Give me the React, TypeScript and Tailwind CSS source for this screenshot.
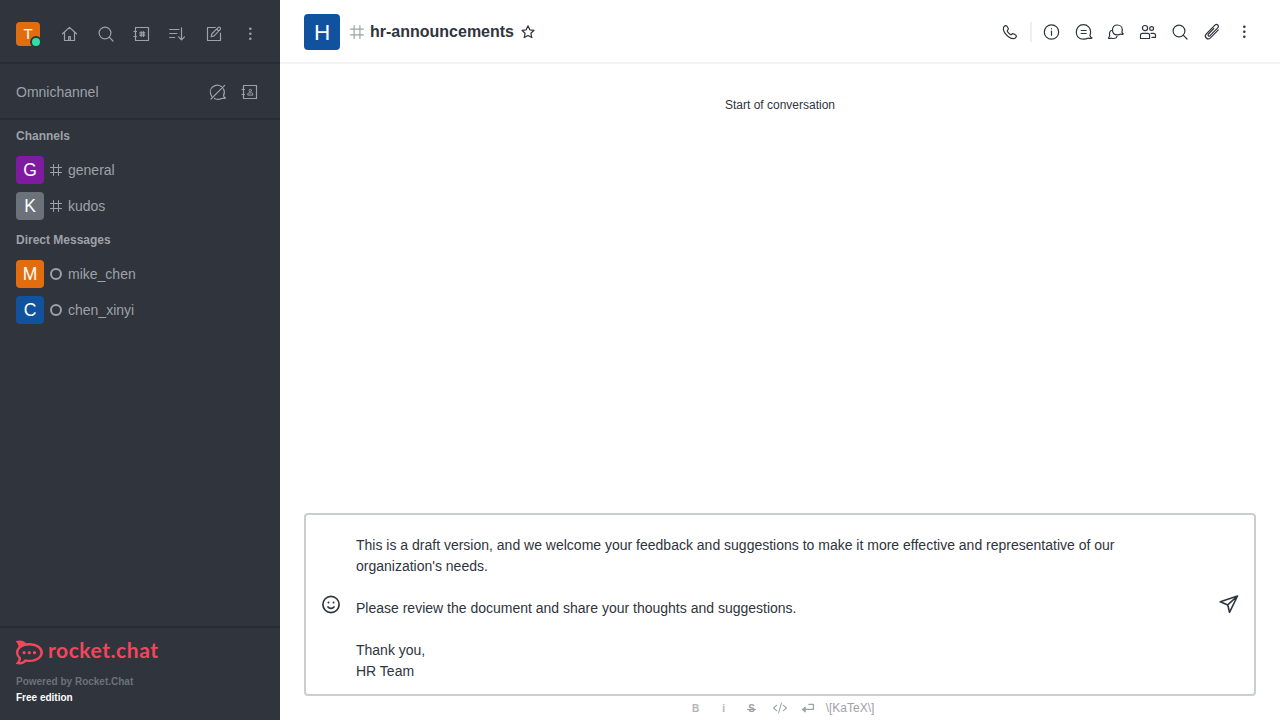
import type { ReactNode } from "react";
import { SiRocketdotchat } from "react-icons/si";

function Icon({ children, className = "size-5", w = 1.2 }: { children: ReactNode; className?: string; w?: number }) {
  return (
    <svg viewBox="0 0 20 20" className={`shrink-0 ${className}`} fill="none" stroke="currentColor" strokeWidth={w} strokeLinecap="round" strokeLinejoin="round">
      {children}
    </svg>
  );
}

function IconButton({ children, label }: { children: ReactNode; label: string }) {
  return (
    <button aria-label={label} className="flex size-7 shrink-0 items-center justify-center">
      {children}
    </button>
  );
}

function Avatar({ letter, className }: { letter: string; className: string }) {
  return (
    <svg viewBox="0 0 200 200" className={`shrink-0 rounded-[4px] ${className}`}>
      <text x="50%" y="50%" dy="0.36em" textAnchor="middle" fill="#ffffff" fontSize="125">{letter}</text>
    </svg>
  );
}

const Search = () => (
  <Icon>
    <circle cx="9" cy="9" r="5.9" />
    <path d="M13.200 13.200 17 17" />
  </Icon>
);

const Kebab = () => (
  <Icon>
    <g fill="currentColor" stroke="none">
      <circle cx="10.300" cy="4.800" r="1.300" />
      <circle cx="10.300" cy="9.800" r="1.300" />
      <circle cx="10.300" cy="14.800" r="1.300" />
    </g>
  </Icon>
);

const Hash = ({ className }: { className: string }) => (
  <svg viewBox="0 0 12 12" className={`shrink-0 ${className}`} fill="none" stroke="currentColor" strokeWidth="1" strokeLinecap="round">
    <path d="M3.500.500v11M8.500.500v11M.500 3.500h11M.500 8.500h11" />
  </svg>
);

function Row({ letter, color, name, direct }: { letter: string; color: string; name: string; direct?: boolean }) {
  return (
    <li className="flex h-9 items-center px-4">
      <Avatar letter={letter} className={`size-7 ${color}`} />
      <span className="ml-1.5 flex size-3 items-center justify-center">
        {direct ? <span className="size-3 rounded-full border-2 border-[#9ea2a8]" /> : <Hash className="size-3" />}
      </span>
      <span className="ml-1.5">{name}</span>
    </li>
  );
}

function Sidebar() {
  return (
    <aside className="flex w-[280px] shrink-0 flex-col bg-[#2f343d] text-sm text-[#9ea2a8]">
      <header className="flex h-16 items-center border-b-2 border-[#282c34] px-4 pt-1.5">
        <div className="relative mr-4 size-6">
          <Avatar letter="T" className="size-6 bg-[#e26d0e]" />
          <span className="absolute -right-[2px] -bottom-[2px] size-3 rounded-full border-2 border-[#2f343d] bg-[#2de0a5]" />
        </div>
        <div className="flex gap-2">
          <IconButton label="Home">
            <Icon>
              <path d="M2.500 9.800 9.500 3.400l7 6.400M4.500 8.600v7.900h10V8.600" />
              <path d="M8.700 16.500v-4h1.600v4" />
            </Icon>
          </IconButton>
          <IconButton label="Search"><Search /></IconButton>
          <IconButton label="Directory">
            <Icon>
              <path d="M3.500 3.500h13v13h-13zM2 7.500h2.500M2 12.500h2.500" />
              <path d="M9.200 7.500v5M11.500 7.500v5M7.800 8.900h5M7.800 11.200h5" />
            </Icon>
          </IconButton>
          <IconButton label="Display">
            <Icon>
              <path d="M1.700 5.500H11M1.700 9.500H8.800M1.700 13.500h5M13.500 3.800v11.800M10.500 12.800l3 3 3-3" />
            </Icon>
          </IconButton>
          <IconButton label="Create new">
            <Icon>
              <path d="M11.300 3.500H3.500v13h13V9.200" />
              <path d="m7.200 12.800.7-3.100 6.200-6.100c.7-.7 1.600-.5 2 0 .6.600.6 1.400 0 2l-6 6.300zM12.700 5l2 2" />
            </Icon>
          </IconButton>
          <IconButton label="More"><Kebab /></IconButton>
        </div>
      </header>

      <section className="flex h-14 items-center border-b-2 border-[#282c34] px-4 pt-0.5">
        <span className="flex-1">Omnichannel</span>
        <div className="flex gap-1">
          <IconButton label="Livechat">
            <Icon>
              <path d="M3.800 14.300C1.400 10.900 2 7 4.800 4.800c2.600-2.100 6.200-1.900 8.700-.3M15.400 6.800c1.300 2.400 1.200 5 .1 7 .4 1.100 1 1.900 2 2.100-1 .7-2.100.7-3.300.3-2.700 1.600-5.600 1.400-7.700.2M3 17 16.700 3.300" />
            </Icon>
          </IconButton>
          <IconButton label="Contacts">
            <Icon>
              <path d="M3.500 3.500h13v13h-13zM2 7.500h2.500M2 12.500h2.500" />
              <g strokeWidth="1">
                <circle cx="10.300" cy="8.500" r="1.200" />
                <path d="M7.800 12.700v-.8c0-.7.5-1 1.200-1h2.600c.7 0 1.200.3 1.200 1v.8z" />
              </g>
            </Icon>
          </IconButton>
        </div>
      </section>

      <nav className="flex-1">
        <h3 className="flex h-8 items-center px-4 text-xs font-bold">Channels</h3>
        <ul>
          <Row letter="G" color="bg-[#7f1b9f]" name="general" />
          <Row letter="K" color="bg-[#6c727a]" name="kudos" />
        </ul>
        <h3 className="flex h-8 items-center px-4 text-xs font-bold">Direct Messages</h3>
        <ul>
          <Row letter="M" color="bg-[#e26d0e]" name="mike_chen" direct />
          <Row letter="C" color="bg-[#10529e]" name="chen_xinyi" direct />
        </ul>
      </nav>

      <footer className="h-[94px] border-t-2 border-[#282c34] px-4 pt-3">
        <div className="flex h-6 items-center text-[#f5455c]">
          <SiRocketdotchat className="size-[27px] shrink-0" />
          <svg viewBox="0 0 116 32" className="ml-1 h-8 w-[116px] shrink-0" fill="currentColor">
            <text x="1" y="22" className="font-['Lato',sans-serif] font-bold" fontSize="21" textLength="110">rocket.chat</text>
          </svg>
        </div>
        <p className="mt-2.5 text-[10px] leading-4 font-bold text-[#6c727a]">Powered by Rocket.Chat</p>
        <p className="text-[10px] leading-4 font-bold text-white">Free edition</p>
      </footer>
    </aside>
  );
}

function RoomHeader() {
  return (
    <header className="flex h-16 shrink-0 items-center border-b-2 border-[#f2f3f5] pt-0.5 pr-[22px] pl-6">
      <Avatar letter="H" className="size-9 bg-[#10529e]" />
      <Hash className="ml-2.5 size-3.5 text-[#9ea2a8]" />
      <h1 className="ml-1.5 text-base font-bold">hr-announcements</h1>
      <Icon className="ml-1 size-5">
        <path d="m10 3.800 1.800 4 4.300.5-3.200 3 .9 4.300-3.800-2.200-3.800 2.200.9-4.300-3.200-3 4.300-.5z" />
      </Icon>
      <div className="ml-auto flex items-center gap-1">
        <IconButton label="Call">
          <Icon>
            <path d="M4 4.600c.8-1.200 2.200-1.500 3-.3l1.200 2c.4.800 0 1.500-.7 1.900-.5.400-.4.800 0 1.400.7 1.100 1.600 2 2.800 2.800.6.400 1 .4 1.400-.1.500-.7 1.200-1 1.900-.5l2 1.200c1.300.8.900 2.100-.3 3-1.600 1.200-4.100.5-6.500-1.100a14 14 0 0 1-4-4C3.400 8.500 2.900 6.300 4 4.600z" />
          </Icon>
        </IconButton>
        <span className="mr-0.5 ml-0.5 h-5 w-0.5 bg-[#eeeff1]" />
        <IconButton label="Info">
          <Icon>
            <circle cx="9.500" cy="10" r="7.200" />
            <path d="M9.500 9v4.300M9.500 6.700v.1" />
          </Icon>
        </IconButton>
        <IconButton label="Threads">
          <Icon>
            <path d="M9.500 17.200c-5 0-7.200-3.400-7.200-7.200s2.700-7.300 7.100-7.300 7.200 3.300 7.200 7c0 1.700-.5 3-.7 3.700.4 1.400 1 2.300 2.100 2.500-1.500.8-3 .5-3.700.2-1.400.8-3 1.100-4.800 1.100zM7.200 8.500h5M7.200 11.500h5" />
          </Icon>
        </IconButton>
        <IconButton label="Discussion">
          <Icon>
            <path d="M11.500 12.900c-2.900 0-5-1.900-5-4.900 0-2.900 2-5 4.900-5s4.900 2.100 4.900 4.700c0 .9-.2 1.700-.4 2.300.2.900.6 1.600 1.300 1.900-.9.600-1.900.5-2.500.1-1 .6-2 .9-3.200.9z" />
            <path d="M5.500 8.500C3.800 9 3.200 11 3.700 13.500c-.2 1.100-.6 2-1.300 2.700 1 .5 1.900.3 2.600-.2 2.700 1.100 5.200.2 6-1.600" />
          </Icon>
        </IconButton>
        <IconButton label="Members">
          <Icon>
            <circle cx="7" cy="6.100" r="2.600" />
            <circle cx="13.600" cy="6.500" r="1.900" />
            <path d="M2.500 16.500v-3.200c0-1.200.7-1.900 1.900-1.900h5.300c1.200 0 1.900.7 1.900 1.900v3.200zM13 11.300h2.500c1.300 0 2 .7 2 1.900v2.200H14" />
          </Icon>
        </IconButton>
        <IconButton label="Search messages"><Search /></IconButton>
        <IconButton label="Files">
          <Icon>
            <path d="M11.800 6.500 6.400 12c-1.100 1.200.5 2.800 1.700 1.700l7.600-7.800c2-2.100-.9-4.600-2.800-2.800L4.300 11.800c-2.700 2.900 1.200 6.800 4.200 4.100l7.800-8" />
          </Icon>
        </IconButton>
        <IconButton label="More options"><Kebab /></IconButton>
      </div>
    </header>
  );
}

function Composer() {
  return (
    <div className="px-6">
      <div className="flex h-[183px] rounded-[4px] border-2 border-[#cbced1]">
        <div className="flex w-[50px] shrink-0 items-center justify-center">
          <Icon className="size-5" w={1.700}>
            <circle cx="10" cy="9.500" r="8.100" />
            <path d="M7 12c1.300 1.700 4.700 1.700 6 0" />
            <path d="M7.500 7.400v.1M12.500 7.400v.1" strokeWidth="2" />
          </Icon>
        </div>
        <p className="flex-1 pt-5 text-sm leading-[21px] whitespace-pre">
          {"This is a draft version, and we welcome your feedback and suggestions to make it more effective and representative of our\norganization's needs.\n\nPlease review the document and share your thoughts and suggestions.\n\nThank you,\nHR Team"}
        </p>
        <button aria-label="Send" className="mr-[15px] flex items-center">
          <Icon className="size-5" w={1.600}>
            <path d="M1.300 6.800 18.500 1 10.500 17.300 8.700 9.900zM8.700 9.900l9.800-8.900" />
          </Icon>
        </button>
      </div>
      <div className="flex h-6 items-center justify-center pr-1 text-[#9ea2a8]">
        <span className="w-7 text-center text-[10px] font-bold opacity-80">B</span>
        <span className="w-7 text-center text-[10px] font-bold opacity-80">i</span>
        <span className="w-7 text-center text-[10px] font-bold">
          <span className="inline-block bg-[linear-gradient(currentColor,currentColor)] bg-[length:100%_1px] bg-[position:0_60%] bg-no-repeat px-px">S</span>
        </span>
        <span className="flex w-7 justify-center">
          <Icon className="size-4" w={1.300}>
            <path d="m6 6.500-4 3.500 4 3.500M14 6.500l4 3.500-4 3.500M11.800 3.800 8.300 16.200" />
          </Icon>
        </span>
        <span className="flex w-7 justify-center">
          <Icon className="size-4" w={1.500}>
            <path d="M11 5.500h5.800v6.300H4M6.500 9 3.200 11.800l3.300 2.900z" />
          </Icon>
        </span>
        <span className="ml-1 text-xs">{"\\[KaTeX\\]"}</span>
      </div>
    </div>
  );
}

export default function App() {
  return (
    <div className="flex h-screen overflow-hidden bg-white font-['Liberation_Sans',Arial,sans-serif] text-[#2f343d]">
      <Sidebar />
      <main className="flex min-w-0 flex-1 flex-col">
        <RoomHeader />
        <div className="flex-1 pt-8 text-center text-xs leading-[18px]">Start of conversation</div>
        <Composer />
      </main>
    </div>
  );
}
